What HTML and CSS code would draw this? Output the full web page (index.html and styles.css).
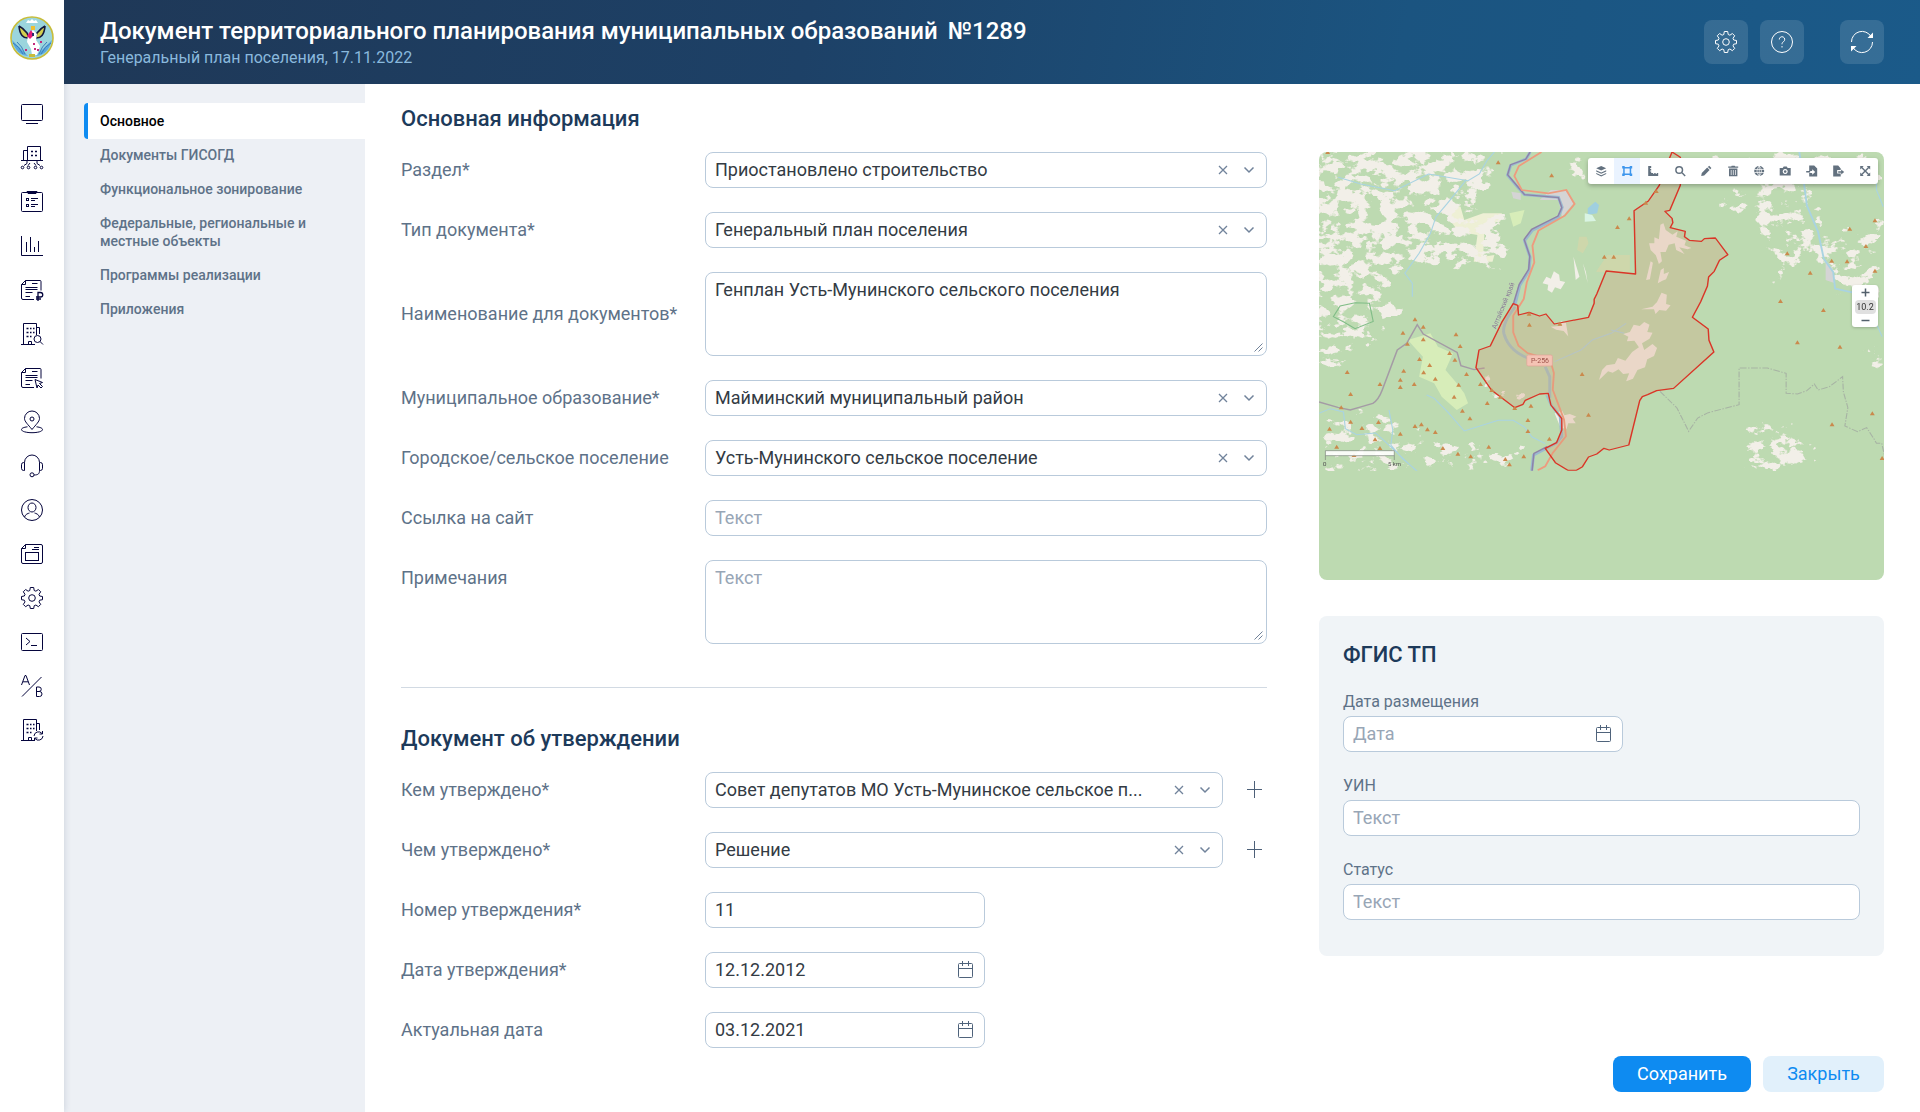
FILE: index.html
```html
<!DOCTYPE html>
<html lang="ru">
<head>
<meta charset="utf-8">
<title>Документ территориального планирования</title>
<link rel="stylesheet" href="styles.css">
</head>
<body>
<svg class="defs" width="0" height="0" aria-hidden="true">
  <symbol id="gear" viewBox="0 0 24 24"><path d="M10.3 1.5h3.4l.5 3 1.700.7 2.500-1.700 2.300 2.300-1.700 2.500.7 1.700 2.800.5v3.200l-2.800.5-.7 1.700 1.700 2.500-2.300 2.300-2.500-1.700-1.700.7-.5 2.800h-3.400l-.5-2.800-1.700-.7-2.500 1.700-2.300-2.300 1.700-2.500-.7-1.700-2.800-.5v-3.200l2.800-.5.7-1.700-1.700-2.500 2.300-2.300 2.500 1.700 1.700-.7z"/><circle cx="12" cy="12" r="3.300"/></symbol>
  <symbol id="clear" viewBox="0 0 10 10"><path d="M1 1l8 8M9 1L1 9"/></symbol>
  <symbol id="chevron" viewBox="0 0 12 8"><path d="M1.500 1.500L6 6l4.500-4.500"/></symbol>
  <symbol id="calendar" viewBox="0 0 18 18"><rect x="2.500" y="2.500" width="14" height="14" rx="1"/><path d="M2.500 7.500h14M6.500 0v5M12.500 0v5"/></symbol>
  <symbol id="plus" viewBox="0 0 18 18"><path d="M9.500 0v17M2 8.500h15"/></symbol>
  <symbol id="building" viewBox="0 0 24 24"><path d="M1 22.500h14M3.500 22V1.500h13V13M16.500 5.500h3V12M8.500 22v-2.500h3V22"/><path d="M6.500 6.500h2M10 6.500h1.500M13 6.500h1.500M6.500 10.500h2M10 10.500h1.500M13 10.500h1.500M6.500 14.500h2M10 14.500h1.500" stroke-width="1.600"/></symbol>
  <symbol id="sheet" viewBox="0 0 24 24"><path d="M14 21.500H3a1.500 1.500 0 0 1-1.500-1.500V6.500l4-4H20a1 1 0 0 1 1 1V12.500M1.500 6.500h4v-4M12 5.500h5.500M5.500 9.500h12M5.500 11.500h12M5.500 14.500h7M5.500 18.500h4.500"/></symbol>
</svg>
<div class="app">
  <aside class="rail">
    <svg class="logo" viewBox="0 0 44 44"><circle cx="22" cy="22" r="21" fill="#9bd5dd" stroke="#c8bd3b" stroke-width="1.600"/><path d="M2 24q6 6 16 16-12-1-16-16M42 24q-6 6-16 16 12-1 16-16" fill="#5ba9dc"/><path d="M3 27q6 3 10 11M7 26q5 4 8 12M41 27q-6 3-10 11M37 26q-5 4-8 12" fill="none" stroke="#397ebc"/><path d="M9 10q4 2 8 7l2 5q-9 1-10-12M35 10q-4 2-8 7l-2 5q9 1 10-12" fill="#d3cf4f" stroke="#15193d" stroke-width="1.600"/><path d="M16 7l2-3 2 1 2-2 2 2 2-1 2 3z" fill="#fff"/><path d="M18 19l5-5 4 4-1 6 4 6-3 9h-5l-1-6-4-7z" fill="#fff"/><path d="M17 20l4-6 3 5-4 4z" fill="#e31a78"/><path d="M21 10h4v4h-4z" fill="#eebf32"/><path d="M22 17h2v3h-2z" fill="#282b69"/><path d="M23 27h2v2h-2zM15 33h2v2h-2zM27 33h2v2h-2zM30 25h2v2h-2zM24 32h2v2h-2z" fill="#c32a7d"/><path d="M19 38h6v3h-6z" fill="#c8bd3b"/></svg>
    <nav class="rail-nav">
      <svg viewBox="0 0 24 24"><rect x="1.500" y="2.500" width="21" height="16" rx="1"/><path d="M6 21.500h12"/></svg>
      <svg viewBox="0 0 24 24"><path d="M1 14.500h22M3.500 14.500v-10h4M7.500 14.500v-14h13v14M7 15v2.500l-3 2M10 17l-2 2.500M14 17l2 2.500M17 15v2.500l3 2"/><path d="M11 5.500h2M15 5.500h2M11 9.500h2M15 9.500h2" stroke-width="1.600"/><circle cx="2.500" cy="21.500" r="1.300"/><circle cx="8.500" cy="21.500" r="1.300"/><circle cx="15.500" cy="21.500" r="1.300"/><circle cx="21.500" cy="21.500" r="1.300"/></svg>
      <svg viewBox="0 0 24 24"><rect x="1.500" y="2.500" width="21" height="19" rx="1"/><path d="M7 2.500v-1h10v1l-1 1H8zM11 8.500h7M11 10.500h4M11 14.500h7M11 16.500h4"/><rect x="6.500" y="8.500" width="2" height="2"/><rect x="6.500" y="14.500" width="2" height="2"/></svg>
      <svg viewBox="0 0 24 24"><path d="M1.500 2v19.500H23M6.500 18V8M10.500 18V3M14.500 18v-5M18.500 18V7"/></svg>
      <svg viewBox="0 0 24 24"><use href="#sheet"/><path d="M18 23v-8.500h2.500a2.200 2.200 0 0 1 0 4.500H16M16 21h5" stroke-width="1.300"/></svg>
      <svg viewBox="0 0 24 24"><use href="#building"/><circle cx="17.500" cy="17" r="3.500" fill="#fff"/><path d="M20 19.500l3 3"/></svg>
      <svg viewBox="0 0 24 24"><use href="#sheet"/><path d="M15 13.500l7.500 3-3 1 3 3-1.500 1.500-3-3-1 3z" fill="#fff"/></svg>
      <svg viewBox="0 0 24 24"><path d="M12 19.500C8 14.500 4.500 11.500 4.500 8.500a7.500 7.500 0 0 1 15 0c0 3-3.500 6-7.500 11z"/><circle cx="12" cy="9" r="2"/><path d="M7.500 16.800C3.500 17.300 1.500 18.300 1.500 19.500c0 2 5 3.200 10.500 3.200s10.500-1.200 10.500-3.200c0-1.200-2-2.200-6-2.700"/></svg>
      <svg viewBox="0 0 24 24"><path d="M4.500 8.500a7.500 7.500 0 0 1 15 0M4.500 8.500v8h-.8a2.200 2.200 0 0 1-2.200-2.200v-3.500A2.200 2.200 0 0 1 3.700 8.500zM19.500 8.500v8h.8a2.200 2.200 0 0 0 2.200-2.200v-3.500a2.200 2.200 0 0 0-2.200-2.300zM19.500 16.500c0 3-1 4.500-5.500 4.500"/><circle cx="12" cy="20.800" r="2"/></svg>
      <svg viewBox="0 0 24 24"><circle cx="12" cy="12" r="10.500"/><ellipse cx="12" cy="9.500" rx="4" ry="4.500"/><path d="M4.500 19c1-3 3.500-3.500 5-4M19.500 19c-1-3-3.500-3.500-5-4"/></svg>
      <svg viewBox="0 0 24 24"><path d="M5.500 2.500H21a1.500 1.500 0 0 1 1.500 1.500v16a1.500 1.500 0 0 1-1.500 1.500H3A1.500 1.500 0 0 1 1.500 20V6.500zM1.500 6.500h4v-4M14 5.500h5M12 7.500h7"/><rect x="5.500" y="10.500" width="13" height="8"/></svg>
      <svg viewBox="0 0 24 24"><use href="#gear"/></svg>
      <svg viewBox="0 0 24 24"><rect x="1.500" y="3.500" width="21" height="17" rx="1"/><path d="M6 8l4 3.500L6 15M11 15.500h6"/></svg>
      <svg viewBox="0 0 24 24"><path d="M2 22.500L21.500 3M1.500 11L5 1.500h1L9.500 11M3 7.800h5.200M16.500 13v9.500h3a2.500 2.500 0 0 0 0-5h-3M16.500 13h2.500a2.200 2.200 0 0 1 0 4.500"/></svg>
      <svg viewBox="0 0 24 24"><use href="#building"/><circle cx="18.500" cy="18" r="5" fill="#fff" stroke="none"/><path d="M14 18a4.500 4.500 0 0 1 8-2.500M23 18a4.500 4.500 0 0 1-8 2.500M22.500 13v3h-3M14.500 23v-3h3"/></svg>
    </nav>
  </aside>
  <div class="page">
    <header class="header">
      <div>
        <h1>Документ территориального планирования муниципальных образований&nbsp; <span class="number">№1289</span></h1>
        <p class="subtitle">Генеральный план поселения, 17.11.2022</p>
      </div>
      <div class="header-actions">
        <button class="tool"><svg viewBox="0 0 24 24"><use href="#gear"/></svg></button>
        <button class="tool"><svg viewBox="0 0 24 24"><circle cx="12" cy="12" r="10.500"/><path d="M9.300 9.500a2.700 2.700 0 1 1 4.300 2.100c-1.100.8-1.600 1.200-1.600 2.700M12 16v1.500"/></svg></button>
        <button class="tool tool-apart"><svg viewBox="0 0 24 24"><path d="M1.500 12A10.500 10.500 0 0 1 21 6.500M22.500 12A10.500 10.500 0 0 1 3 17.500"/><path d="M23 2.500V8h-5.500zM1 21.500V16h5.500z" fill="#fff" stroke="none"/></svg></button>
      </div>
    </header>
    <div class="body">
      <nav class="sections">
        <a class="active">Основное</a>
        <a>Документы ГИСОГД</a>
        <a>Функциональное зонирование</a>
        <a>Федеральные, региональные и местные объекты</a>
        <a>Программы реализации</a>
        <a>Приложения</a>
      </nav>
      <main class="content">
        <form class="form">
          <h2>Основная информация</h2>
          <div class="row"><label>Раздел*</label><div class="field"><span>Приостановлено строительство</span><svg class="clear"><use href="#clear"/></svg><svg class="chev"><use href="#chevron"/></svg></div></div>
          <div class="row"><label>Тип документа*</label><div class="field"><span>Генеральный план поселения</span><svg class="clear"><use href="#clear"/></svg><svg class="chev"><use href="#chevron"/></svg></div></div>
          <div class="row"><label>Наименование для документов*</label><div class="field area"><span>Генплан Усть-Мунинского сельского поселения</span><svg class="grip" viewBox="0 0 9 9"><path d="M.5 8.500l8-8M4.500 8.500l4-4"/></svg></div></div>
          <div class="row"><label>Муниципальное образование*</label><div class="field"><span>Майминский муниципальный район</span><svg class="clear"><use href="#clear"/></svg><svg class="chev"><use href="#chevron"/></svg></div></div>
          <div class="row"><label>Городское/сельское поселение</label><div class="field"><span>Усть-Мунинского сельское поселение</span><svg class="clear"><use href="#clear"/></svg><svg class="chev"><use href="#chevron"/></svg></div></div>
          <div class="row"><label>Ссылка на сайт</label><div class="field empty"><span>Текст</span></div></div>
          <div class="row top"><label>Примечания</label><div class="field area empty"><span>Текст</span><svg class="grip" viewBox="0 0 9 9"><path d="M.5 8.500l8-8M4.500 8.500l4-4"/></svg></div></div>
          <hr>
          <h2>Документ об утверждении</h2>
          <div class="row"><label>Кем утверждено*</label><div class="field tight"><span>Совет депутатов МО Усть-Мунинское сельское п...</span><svg class="clear"><use href="#clear"/></svg><svg class="chev"><use href="#chevron"/></svg></div><svg class="plus"><use href="#plus"/></svg></div>
          <div class="row"><label>Чем утверждено*</label><div class="field tight"><span>Решение</span><svg class="clear"><use href="#clear"/></svg><svg class="chev"><use href="#chevron"/></svg></div><svg class="plus"><use href="#plus"/></svg></div>
          <div class="row"><label>Номер утверждения*</label><div class="field short"><span>11</span></div></div>
          <div class="row"><label>Дата утверждения*</label><div class="field short"><span>12.12.2012</span><svg class="cal"><use href="#calendar"/></svg></div></div>
          <div class="row"><label>Актуальная дата</label><div class="field short"><span>03.12.2021</span><svg class="cal"><use href="#calendar"/></svg></div></div>
        </form>
        <div class="side">
          <div class="map">
            <svg class="map-canvas" viewBox="24 36 1501 1284" preserveAspectRatio="none">
              <defs>
                <filter id="glades" filterUnits="userSpaceOnUse" x="24" y="36" width="1501" height="957" color-interpolation-filters="sRGB">
                  <feGaussianBlur in="SourceGraphic" stdDeviation="18" result="zone"/>
                  <feTurbulence type="fractalNoise" baseFrequency=".026 .032" numOctaves="4" seed="8"/>
                  <feColorMatrix values="0 0 0 0 0  0 0 0 0 0  0 0 0 0 0  1 0 0 0 0" result="noise"/>
                  <feComposite in="noise" in2="zone" operator="arithmetic" k2=".6" k3=".3"/>
                  <feColorMatrix values="0 0 0 0 .949  0 0 0 0 .937  0 0 0 0 .91  0 0 0 22 -12.500"/>
                </filter>
                <path id="peak" d="M0-6l6.500 12h-13z"/>
                <clipPath id="frame"><path d="M24 36h1501v956H24z"/></clipPath>
              </defs>
              <path d="M24 36h1501v1284H24z" fill="#bddab1"/>
              <g clip-path="url(#frame)">
                <path d="M260 600l60-20 20 40 40 20-20 50 30 40 20 30 10 30-30 20-40-40-20-40-40-20 10-60zM530 220l40-10-10 40-20 10z" fill="#d7edb9"/>
                <path d="M370 190l30 10 10 40 50-20 50 0-5 25-40 5-5 100 30-5-5 20-50 0 10-80-50-10-20-30z" fill="#eef0d5"/>
                <path d="M790 345l60 0 0 55-90-5zM715 290l20 0 5 20-15 30-15-10z" fill="#d5d6a8" fill-opacity=".7"/>
                <g filter="url(#glades)" fill="#000">
                  <path d="M0 20h500L490 120 420 240 540 200 530 380 400 390 260 380 200 460 0 430z"/>
                  <path d="M0 430h180l100 80-60 60L100 690 0 680z" opacity=".88"/>
                  <path d="M24 820l200-20 60 80 300 40v90H24z" opacity=".78"/>
                  <path d="M410 680l70 20 50 60 90-20-30 50-90-10-60-40z" opacity=".76"/>
                  <path d="M1000 36h525v100h-400zM1060 150l260-20 60 150 150-60v330l-80-80-50 40-20-90-50-60-60 40-60 60 20-120z" opacity=".86"/>
                  <path d="M1150 820l60 40 80 0 60 60 0 80h-200z"/><path d="M1450 600l80 0v110l-60-30z" opacity=".85"/>
                  <path d="M600 50l200-10 0 100-130-20z" opacity=".75"/>
                </g>
                <path d="M618 430l10-20 12 6 8-22 14 10 2 18 14 4-12 22-15-6-8 16-12-8 2-16zM700 350l8 30 8 30-10 10zM725 370l8 25 5 35z" fill="#f2efe8"/>
                <path d="M640 150l40 0 20 40-30 40-10-50-50 0zM1370 360l20 30 5 40-25-10zM535 155l25 5v20l-20-5z" fill="#d5d4d5"/>
                <path d="M738 205l20-20 10 10-5 25-25 5z" fill="#9fcfe0"/><path d="M730 220l20 5 10 18-30 2z" fill="#d9f4e3"/>
                <path d="M768 720l8-30 12-14 22-4 8-18 20 8 18-26 18-14-12-20-20 2 4-14-14-8 18-6 10-22 16 4 12-12 14 8-6 22 14 2-8 18-20 14 6 20 22-18 12 12-8 24-18 10-6 24-20 8-12 26-18 8 8-24-16 2-12-14-16 10-12-4zM880 508l30-8 12-14 12-28 14 6-2 28 12 4-12 16-18-2-10 12-4-14zM905 330l-4-20 14 0 0-18 12 6 4-44 8-4 6 20 18 14 14-10-4 16 26 12-4 14 18 8-10 4-22-6 14 20-22-12-4-20-16 4-8 22-14 0 4 28-8 8-8-26zM924 430l8-40 8-6 0 18 14-6-8 22-10 4zM893 420l12-56 6 4-8 50zM650 820l20-8 6 14 14-4 18 8-10 6 8 14-20 0-4 16-16-2zM640 560l30-3-4-14 14 6 6 40-12-16-20-4z" fill="#f2efe8"/>
                <g fill="none" stroke="#a9d3e2" stroke-width="3">
                  <path d="M75 112l60 20 90 20 90-50 105 20 30-20 20-40 20-26M415 120l-50 70-30 40-15 50-30 60-38 60 20 30v40"/>
                  <path d="M24 820l30-14 35 10 5 50 30 18 50-5 20 20 90 95M210 810l10 60-5 45 30 40 40 38M310 765l20 10 35 40 45 58 90-32 40 0 30 20 20 30 35 20"/>
                  <path d="M1505 100l0 50 18 50M1500 540l20 50M650 665l30-15 40-20 30-30 50-20 40-30M800 570l35 10"/>
                  <path d="M1300 36l12 90 8 70 30 80 15 80 25 40 5 50 60 15" stroke-width="5"/>
                  <path d="M545 500q-35 50-30 80 15 60 80 80M625 680l12 30 0 60-6 0 12 30" stroke="#9fc2c8" stroke-width="8"/>
                </g>
                <path d="M24 786l50 16 33 8 60-20q15-10 25-40l40-120 25-20 28-56 16 28 90 55 10 40 35 12 28-5" fill="none" stroke="#a49ba5" stroke-width="4"/>
                <path d="M62 530l18-32 40-10 38 2 10 54-48 22-30-20z" fill="none" stroke="#80bd87" stroke-width="3"/>
                <path d="M585 36l-10 20-42 20-8 30 30 40 15 18 90 8 10 30-10 30-70 40-20 30 15 50-3 40-25 45-13 60M645 800l20 30 4 60-15 20-60 35-5 48" fill="none" stroke="#9bb9d0" stroke-width="8"/>
                <path d="M585 36l-12 22-40 16-8 30 30 40 15 20 90 9 9 30-10 25-70 40-20 30 15 50-3 40-25 45-16 60M630 920l-35 20-5 53" fill="none" stroke="#8e82a8" stroke-width="4"/>
                <path d="M615 36l-60 42-12 30 20 42 70 10 48-10 22 42-26 35-70 45-16 45 5 50-20 60-8 50-28 50 0 50 14 40 24 22 60 20 10 40-3 50 30 90 5 50-35 50-20 40-20 12" fill="none" stroke="#ee9b7e" stroke-width="5"/>
                <path d="M930 754l45 50 31 70 24-40 28-16 82-24V684h75l50 16v60l30 2 25-10 20-20 10 18 30-10 35-30 2 45 12 48-8 55 34 17 24-12 20 35 6 12h14l10 50" fill="none" stroke="#a7b3a4" stroke-width="3" stroke-dasharray="18 4 4 4"/>
                <path d="M962 36L984 52 984 136 956 211 943 214 962 235 964 248 957 263 997 274 995 290 1008 301 1040 304 1048 296 1077 294 1110 344 1088 361 1074 394 1059 411 1056 438 1038 485 1016 532 1058 567 1060 601 1073 636 966 745 921 752 897 764 883 770 876 782 847 915 795 930 781 925 762 942 740 951 724 980 708 991 685 991 652 968 625 925 655 908 669 870 669 836 640 795 633 760 610 762 572 781 566 793 544 803 482 750 441 683 449 630 479 618 509 548 540 491 552 496 554 525 582 517 610 528 627 522 649 552 740 532 755 490 755 478 762 462 787 393 865 402 861 212 899 183 928 136 955 55z" fill="#d99b78" fill-opacity=".28" stroke="#da3527" stroke-width="3.800" stroke-linejoin="round"/>
                <g fill="#ca894c">
                  <use href="#peak" x="47" y="36"/><use href="#peak" x="500" y="67"/><use href="#peak" x="642" y="106"/><use href="#peak" x="848" y="235"/><use href="#peak" x="817" y="261"/><use href="#peak" x="782" y="350"/><use href="#peak" x="807" y="350"/><use href="#peak" x="920" y="153"/><use href="#peak" x="892" y="188"/><use href="#peak" x="582" y="521"/><use href="#peak" x="583" y="554"/><use href="#peak" x="664" y="551"/><use href="#peak" x="723" y="702"/><use href="#peak" x="740" y="824"/><use href="#peak" x="279" y="538"/><use href="#peak" x="301" y="560"/><use href="#peak" x="247" y="578"/><use href="#peak" x="301" y="598"/><use href="#peak" x="259" y="611"/><use href="#peak" x="388" y="583"/><use href="#peak" x="399" y="618"/><use href="#peak" x="371" y="639"/><use href="#peak" x="385" y="659"/><use href="#peak" x="291" y="657"/><use href="#peak" x="318" y="675"/><use href="#peak" x="249" y="692"/><use href="#peak" x="302" y="697"/><use href="#peak" x="333" y="716"/><use href="#peak" x="240" y="719"/><use href="#peak" x="240" y="741"/><use href="#peak" x="277" y="732"/><use href="#peak" x="186" y="732"/><use href="#peak" x="99" y="696"/><use href="#peak" x="108" y="762"/><use href="#peak" x="83" y="802"/><use href="#peak" x="416" y="702"/><use href="#peak" x="395" y="734"/><use href="#peak" x="453" y="732"/><use href="#peak" x="383" y="770"/><use href="#peak" x="471" y="789"/><use href="#peak" x="405" y="812"/><use href="#peak" x="425" y="835"/><use href="#peak" x="483" y="750"/><use href="#peak" x="506" y="770"/><use href="#peak" x="544" y="804"/><use href="#peak" x="587" y="797"/><use href="#peak" x="579" y="840"/><use href="#peak" x="579" y="873"/><use href="#peak" x="636" y="896"/><use href="#peak" x="568" y="949"/><use href="#peak" x="519" y="957"/><use href="#peak" x="530" y="973"/><use href="#peak" x="475" y="920"/><use href="#peak" x="427" y="949"/><use href="#peak" x="393" y="941"/><use href="#peak" x="353" y="924"/><use href="#peak" x="333" y="876"/><use href="#peak" x="312" y="868"/><use href="#peak" x="296" y="853"/><use href="#peak" x="279" y="858"/><use href="#peak" x="240" y="881"/><use href="#peak" x="182" y="846"/><use href="#peak" x="138" y="864"/><use href="#peak" x="108" y="845"/><use href="#peak" x="52" y="866"/><use href="#peak" x="71" y="920"/><use href="#peak" x="173" y="898"/><use href="#peak" x="186" y="924"/><use href="#peak" x="117" y="945"/><use href="#peak" x="1268" y="340"/><use href="#peak" x="1329" y="398"/><use href="#peak" x="1386" y="362"/><use href="#peak" x="1427" y="364"/><use href="#peak" x="1434" y="266"/><use href="#peak" x="1501" y="241"/><use href="#peak" x="1477" y="318"/><use href="#peak" x="1501" y="392"/><use href="#peak" x="1250" y="483"/><use href="#peak" x="1364" y="510"/><use href="#peak" x="1295" y="607"/><use href="#peak" x="1408" y="620"/><use href="#peak" x="1387" y="853"/><use href="#peak" x="1494" y="820"/><use href="#peak" x="1520" y="954"/>
                </g>
                <rect x="576" y="645" width="68" height="33" rx="4" fill="#f4c3b4" stroke="#dfa596" stroke-width="2"/>
                <text x="587" y="669" font-size="20" textLength="48" lengthAdjust="spacingAndGlyphs" fill="#9b5148">Р-256</text>
                <text transform="translate(494 568) rotate(-70)" font-size="19" textLength="146" lengthAdjust="spacingAndGlyphs" fill="#8c7d98">Алтайский край</text>
                <path d="M41 932h183v15H41z" fill="#fff" fill-opacity=".9"/><path d="M41 960v-28h183v28M41 947h183" fill="none" stroke="#7f887e" stroke-width="2"/>
                <text x="34" y="979" font-size="16" textLength="10" lengthAdjust="spacingAndGlyphs" fill="#555">0</text><text x="207" y="979" font-size="16" textLength="35" lengthAdjust="spacingAndGlyphs" fill="#555">5 km</text>
              </g>
            </svg>
            <div class="map-tools">
              <svg viewBox="0 0 12 12"><path d="M6 1l5 2.300L6 5.600 1 3.300zM1 5.300l5 2.300 5-2.300v1.200L6 8.800 1 6.500zM1 8l5 2.300L11 8v1L6 11.500 1 9z"/></svg>
              <svg class="on" viewBox="0 0 12 12"><path d="M1 1h2.500v1h5V1H11v2.500h-1v5h1V11H8.500v-1h-5v1H1V8.500h1v-5H1zm2.500 2.500v5h5v-5z" fill-rule="evenodd"/></svg>
              <svg viewBox="0 0 12 12"><path d="M1 1h3v7h7v3H1zM4 3H3v1h1zM4 5.500H3v1h1zM6 8v1h1V8zM8.500 8v1h1V8z" fill-rule="evenodd"/></svg>
              <svg viewBox="0 0 12 12"><circle cx="5" cy="5" r="3.300" fill="none" stroke="#63717f" stroke-width="1.500"/><path d="M7.300 8.300l1-1L11.500 10.500l-1 1z"/></svg>
              <svg viewBox="0 0 12 12"><path d="M1 11l.6-3L7 2.600 9.400 5 4 10.400zM7.700 1.900L9 .8 11.200 3l-1.100 1.300z"/></svg>
              <svg viewBox="0 0 12 12"><path d="M1 1.500h3L4.500.7h3l.5.8h3v1.200H1zM1.800 3.500h8.400V11.300H1.800zM3.600 5v5h.7V5zM5.700 5v5h.7V5zM7.800 5v5h.7V5z" fill-rule="evenodd"/></svg>
              <svg viewBox="0 0 12 12"><circle cx="6" cy="6" r="5"/><path d="M1 4.500h10M1 7.500h10M6 1v10M6 1Q1.500 6 6 11 10.500 6 6 1" fill="none" stroke="#fff" stroke-width=".7"/></svg>
              <svg viewBox="0 0 12 12"><path d="M.5 3h3L4.500 1.500h3L8.500 3h3v7.500H.5zM6 4a2.500 2.500 0 1 0 .01 0M6 5.200a1.300 1.300 0 1 1-.01 0" fill-rule="evenodd"/></svg>
              <svg viewBox="0 0 12 12"><path d="M3 .5h5l3 3v8H3V8h3v1.800L9 7 6 4.200V6H3zM0 6h4v1.500H0z"/></svg>
              <svg viewBox="0 0 12 12"><path d="M1 .5h5l2.500 3V5H5v3.500h3.500v3H1zM6 6.200h3V4.500L12 7 9 9.500V7.700H6z"/></svg>
              <svg viewBox="0 0 12 12"><path d="M1 1h3.500L3.300 2.300 6 5l2.700-2.700L7.500 1H11v3.500L9.700 3.300 7 6l2.700 2.700L11 7.500V11H7.500l1.200-1.300L6 7 3.300 9.700 4.500 11H1V7.500l1.300 1.200L5 6 2.300 3.300 1 4.500z"/></svg>
            </div>
            <div class="zoom"><svg viewBox="0 0 9 9"><path d="M4.500.5v8M.5 4.500h8"/></svg><span>10.2</span><svg viewBox="0 0 9 9"><path d="M.5 4.500h8"/></svg></div>
          </div>
          <section class="card">
            <h2>ФГИС ТП</h2>
            <label>Дата размещения</label>
            <div class="field short empty"><span>Дата</span><svg class="cal"><use href="#calendar"/></svg></div>
            <label>УИН</label>
            <div class="field empty"><span>Текст</span></div>
            <label>Статус</label>
            <div class="field empty"><span>Текст</span></div>
          </section>
          <div class="buttons"><button class="btn save">Сохранить</button><button class="btn close">Закрыть</button></div>
        </div>
      </main>
    </div>
  </div>
</div>
</body>
</html>
```
FILE: styles.css
```css
* { box-sizing: border-box; }
body { margin: 0; font: 18px/24px Roboto, "Liberation Sans", sans-serif; color: #333b44; background: #fff; }
h1, h2, p { margin: 0; }
button { border: 0; font: inherit; padding: 0; }
svg { display: block; flex: none; fill: none; stroke: currentColor; }
.defs { position: absolute; }
.app { display: flex; width: 1920px; height: 1112px; overflow: hidden; }
.rail { width: 64px; flex: none; padding-top: 16px; background: #fff; box-shadow: 0 0 7px rgba(30, 58, 92, .18); z-index: 1; clip-path: inset(0 -10px 0 0); }
.logo { width: 44px; height: 44px; margin: 0 auto; stroke: none; }
.rail-nav { display: flex; flex-direction: column; align-items: center; gap: 20px; margin-top: 42px; color: #04043c; }
.rail-nav svg { width: 24px; height: 24px; }
.page { flex: 1; display: flex; flex-direction: column; }
.header { position: relative; z-index: 2; height: 84px; flex: none; display: flex; align-items: flex-start; justify-content: space-between; padding: 14px 36px 0; color: #fff; background: linear-gradient(100deg, #1f3857 0%, #1d4167 40%, #1b5480 72%, #1b5a89 100%); }
h1 { font-size: 24px; line-height: 34px; font-weight: 500; }
.number { margin-left: -2px; }
.subtitle { font-size: 16px; line-height: 20px; color: #8ab9dd; }
.header-actions { display: flex; gap: 12px; margin-top: 6px; }
.tool { width: 44px; height: 44px; border-radius: 8px; display: grid; place-items: center; color: #fff; background: rgba(255, 255, 255, .12); }
.tool svg { width: 24px; height: 24px; }
.tool-apart { margin-left: 24px; }
.body { flex: 1; display: flex; min-height: 0; }
.sections { width: 301px; flex: none; padding: 20px 0 0 20px; background: #edf0f5; color: #5e7288; font-size: 14px; line-height: 18px; font-weight: 500; }
.sections a { display: block; padding: 8px 50px 8px 16px; }
.sections .active { margin: -1px 0; padding: 9px 16px 9px 12px; border-left: 4px solid #0e8bf1; border-radius: 4px 0 0 4px; background: #fff; color: #000; }
.content { flex: 1; display: flex; gap: 52px; padding: 19px 36px 20px 36px; }
.form { width: 866px; flex: none; }
h2 { font-size: 22px; line-height: 32px; font-weight: 500; color: #1d3a5a; }
.form h2 { margin-bottom: 17px; }
.row { display: flex; align-items: center; margin-bottom: 24px; }
.row.top { align-items: flex-start; }
.row.top label { padding-top: 6px; }
.row label { width: 304px; flex: none; color: #5e7288; }
.field { flex: 1; min-width: 0; height: 36px; display: flex; align-items: center; padding: 0 11px 0 9px; border: 1px solid #b9cadb; border-radius: 8px; background: #fff; color: #333b44; }
.field span { flex: 1; white-space: nowrap; }
.empty { color: #98a6b6; }
.area { height: 84px; align-items: flex-start; padding-top: 5px; padding-right: 3px; }
.grip { width: 9px; height: 9px; align-self: flex-end; margin-bottom: 3px; color: #718299; }
.clear { width: 10px; height: 10px; color: #71839b; stroke-width: 1.300; }
.chev { width: 12px; height: 8px; margin-left: 15px; color: #71839b; stroke-width: 1.500; }
.tight { flex: 0 0 518px; }
.short { flex: 0 0 280px; width: 280px; padding-right: 10px; }
.cal { width: 18px; height: 18px; color: #4f637b; }
.plus { width: 18px; height: 18px; margin-left: 22px; color: #4d6078; }
hr { height: 1px; border: 0; margin: 43px 0 35px; background: #d2dae3; }
.side { flex: 1; display: flex; flex-direction: column; padding-top: 49px; }
.map { position: relative; height: 428px; flex: none; border-radius: 8px; overflow: hidden; }
.map-canvas { width: 565px; height: 428px; stroke: none; }
.map-tools { position: absolute; top: 6px; right: 6px; display: flex; height: 26px; border-radius: 3px; background: #fff; box-shadow: 0 2px 4px rgba(0, 0, 0, .25); color: #63717f; }
.map-tools svg { width: 26.400px; height: 26px; padding: 7px; fill: currentColor; stroke: none; }
.map-tools .on { color: #3e96ed; background: #eaf3ff; }
.zoom { position: absolute; top: 133px; right: 6px; width: 26px; height: 42px; display: flex; flex-direction: column; align-items: center; justify-content: space-between; padding: 3px 0 2px; border-radius: 3px; background: #fff; box-shadow: 0 1px 3px rgba(0, 0, 0, .2); color: #53606c; }
.zoom svg { width: 9px; height: 9px; stroke-width: 1.500; }
.zoom span { width: 21px; height: 14px; border-radius: 4px; background: #e0e0e0; color: #333; font-size: 9px; line-height: 15px; text-align: center; }
.card { height: 340px; margin-top: 36px; padding: 23px 24px 22px; border-radius: 8px; background: #f0f4f7; }
.card label { display: block; margin-top: 24px; font-size: 16px; line-height: 20px; padding-bottom: 4px; color: #5e7288; height: 24px; }
.card h2 + label { margin-top: 21px; }
.buttons { display: flex; justify-content: flex-end; gap: 12px; margin-top: auto; }
.btn { height: 36px; border-radius: 8px; }
.save { width: 138px; background: #0e8bf1; color: #fff; }
.close { width: 121px; background: #e1f0fb; color: #0e8bf1; }
```
